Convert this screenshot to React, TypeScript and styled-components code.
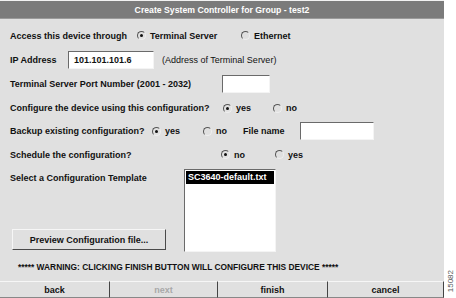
import React from "react";
import styled, { createGlobalStyle } from "styled-components";

const Global = createGlobalStyle`
  html, body { margin: 0; padding: 0; background: #fff; }
  body { font-family: "Liberation Sans", Arial, sans-serif; }
`;

const Frame = styled.div`
  display: flex;
  width: 456px;
  height: 298px;
`;

const Panel = styled.div`
  width: 444px;
  height: 298px;
  background: #e0e0e0;
  display: flex;
  flex-direction: column;
  box-sizing: border-box;
  border-top: 1px solid #f2f2f2;
`;

const Side = styled.div`
  flex: 1;
  background: #fff;
  display: flex;
  align-items: flex-end;
  justify-content: center;
  padding-bottom: 6px;
`;

const Stamp = styled.span`
  writing-mode: vertical-rl;
  transform: rotate(180deg);
  font-size: 8px;
  color: #555;
  font-family: "Liberation Sans", Arial, sans-serif;
`;

const TitleBar = styled.div`
  height: 17px;
  background: #7b7b7b;
  color: #fff;
  font-weight: bold;
  font-size: 8.7px;
  display: flex;
  align-items: center;
  justify-content: center;
  border-bottom: 1px solid #9a9a9a;
`;

const Body = styled.div`
  flex: 1;
  display: flex;
  flex-direction: column;
  padding: 5px 0 0 10px;
`;

const Row = styled.div<{ $h: number }>`
  display: flex;
  align-items: center;
  height: ${(p) => p.$h}px;
  font-size: 9px;
  font-weight: bold;
  color: #111;
`;

const Label = styled.span<{ $w?: number }>`
  ${(p) => (p.$w ? `width: ${p.$w}px;` : "")}
  flex-shrink: 0;
  white-space: nowrap;
`;

const Option = styled.label<{ $w?: number }>`
  display: flex;
  align-items: center;
  gap: 4px;
  ${(p) => (p.$w ? `width: ${p.$w}px;` : "")}
  flex-shrink: 0;
  white-space: nowrap;
`;

const Radio = styled.span<{ $on?: boolean }>`
  width: 9px;
  height: 9px;
  border-radius: 50%;
  box-sizing: border-box;
  border: 1px solid;
  border-color: #555 #eee #eee #555;
  background: #e0e0e0;
  position: relative;
  &::after {
    content: "";
    display: ${(p) => (p.$on ? "block" : "none")};
    position: absolute;
    left: 2px;
    top: 2px;
    width: 3px;
    height: 3px;
    border-radius: 50%;
    background: #111;
  }
`;

const Field = styled.div<{ $w: number }>`
  width: ${(p) => p.$w}px;
  height: 18px;
  box-sizing: border-box;
  background: #fff;
  border: 1px solid;
  border-color: #6a6a6a #f4f4f4 #f4f4f4 #6a6a6a;
  font-size: 9px;
  font-weight: bold;
  display: flex;
  align-items: center;
  padding-left: 5px;
  flex-shrink: 0;
`;

const Note = styled.span`
  font-weight: normal;
  margin-left: 8px;
  white-space: nowrap;
`;

const Lower = styled.div`
  display: flex;
  margin-top: 2px;
`;

const LeftCol = styled.div`
  width: 174px;
  display: flex;
  flex-direction: column;
  justify-content: space-between;
  padding-top: 1px;
  padding-bottom: 2px;
`;

const PreviewButton = styled.div`
  margin-left: 2px;
  width: 154px;
  height: 21px;
  box-sizing: border-box;
  border: 1px solid;
  border-color: #f6f6f6 #4a4a4a #4a4a4a #f6f6f6;
  display: flex;
  align-items: center;
  justify-content: center;
  font-size: 9px;
  font-weight: bold;
  color: #111;
`;

const ListBox = styled.div`
  width: 92px;
  height: 83px;
  box-sizing: border-box;
  background: #fff;
  border: 1px solid;
  border-color: #6a6a6a #f4f4f4 #f4f4f4 #6a6a6a;
  padding: 1px;
`;

const ListItem = styled.div<{ $sel?: boolean }>`
  background: ${(p) => (p.$sel ? "#000" : "transparent")};
  color: ${(p) => (p.$sel ? "#fff" : "#000")};
  font-size: 9px;
  font-weight: bold;
  height: 13px;
  line-height: 13px;
  padding-left: 2px;
`;

const Warning = styled.div`
  height: 29px;
  display: flex;
  align-items: center;
  padding-left: 18px;
  font-size: 8.4px;
  font-weight: bold;
  color: #111;
  white-space: nowrap;
`;

const Bar = styled.div`
  display: flex;
  height: 17px;
`;

const BarButton = styled.div<{ $w: number; $disabled?: boolean }>`
  width: ${(p) => p.$w}px;
  box-sizing: border-box;
  border-top: 1px solid #f6f6f6;
  border-right: 1px solid #444;
  border-bottom: 1px solid #888;
  display: flex;
  align-items: center;
  justify-content: center;
  font-size: 9px;
  font-weight: bold;
  color: ${(p) => (p.$disabled ? "#a8a8a8" : "#111")};
`;

export default function App() {
  return (
    <>
      <Global />
      <Frame>
        <Panel>
          <TitleBar>Create System Controller for Group - test2</TitleBar>
          <Body>
            <Row $h={23}>
              <Label $w={127}>Access this device through</Label>
              <Option $w={104}>
                <Radio $on />
                Terminal Server
              </Option>
              <Option>
                <Radio />
                Ethernet
              </Option>
            </Row>
            <Row $h={25}>
              <Label $w={58}>IP Address</Label>
              <Field $w={86}>101.101.101.6</Field>
              <Note>(Address of Terminal Server)</Note>
            </Row>
            <Row $h={24}>
              <Label $w={212}>Terminal Server Port Number (2001 - 2032)</Label>
              <Field $w={48} />
            </Row>
            <Row $h={24}>
              <Label $w={213}>Configure the device using this configuration?</Label>
              <Option $w={50}>
                <Radio $on />
                yes
              </Option>
              <Option>
                <Radio />
                no
              </Option>
            </Row>
            <Row $h={22}>
              <Label $w={142}>Backup existing configuration?</Label>
              <Option $w={51}>
                <Radio $on />
                yes
              </Option>
              <Option $w={40}>
                <Radio />
                no
              </Option>
              <Label $w={57}>File name</Label>
              <Field $w={74} />
            </Row>
            <Row $h={25}>
              <Label $w={211}>Schedule the configuration?</Label>
              <Option $w={54}>
                <Radio $on />
                no
              </Option>
              <Option>
                <Radio />
                yes
              </Option>
            </Row>
            <Lower>
              <LeftCol>
                <Row $h={16}>
                  <Label>Select a Configuration Template</Label>
                </Row>
                <PreviewButton>Preview Configuration file...</PreviewButton>
              </LeftCol>
              <ListBox>
                <ListItem $sel>SC3640-default.txt</ListItem>
              </ListBox>
            </Lower>
          </Body>
          <Warning>***** WARNING: CLICKING FINISH BUTTON WILL CONFIGURE THIS DEVICE *****</Warning>
          <Bar>
            <BarButton $w={110}>back</BarButton>
            <BarButton $w={108} $disabled>next</BarButton>
            <BarButton $w={110}>finish</BarButton>
            <BarButton $w={116}>cancel</BarButton>
          </Bar>
        </Panel>
        <Side>
          <Stamp>15082</Stamp>
        </Side>
      </Frame>
    </>
  );
}
